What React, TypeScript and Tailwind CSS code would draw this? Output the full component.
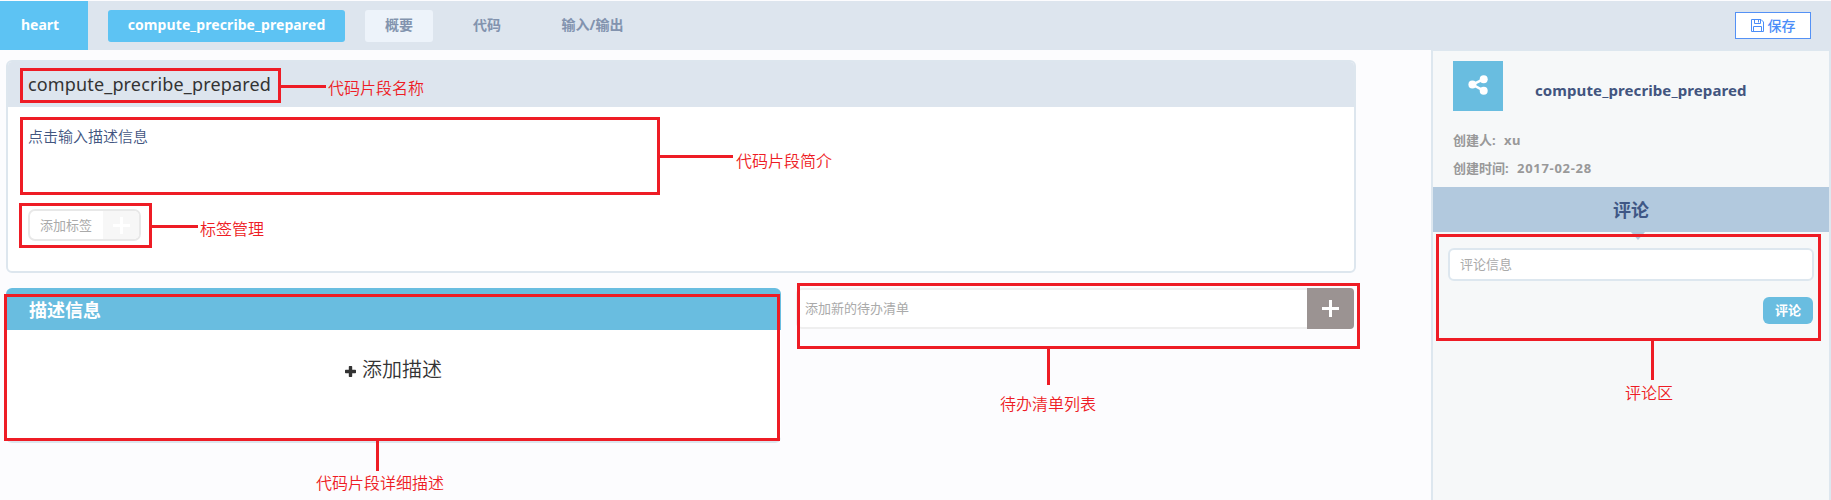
import React from "react";

function Cross({ className }: { className: string }) {
  return (
    <svg viewBox="0 0 17 17" className={className} fill="currentColor">
      <path d="M7 0h3v7h7v3h-7v7h-3v-7h-7v-3h7z" />
    </svg>
  );
}

function BoldPlus() {
  return (
    <svg viewBox="0 0 11 11" className="mt-[2px] h-[11px] w-[11px]" fill="currentColor">
      <path d="M4.5 0h2q.7 0 .7.7v3.1h3.1q.7 0 .7.7v2q0 .7-.7.7H7.2v3.1q0 .7-.7.7h-2q-.7 0-.7-.7V7.2H.7q-.7 0-.7-.7v-2q0-.7.7-.7h3.1V.7q0-.7.7-.7z" />
    </svg>
  );
}

function Share() {
  return (
    <svg viewBox="0 0 20 20" className="-mt-0.5 h-5 w-5" fill="currentColor">
      <path d="M15.7 4.2 4.4 9.6l11.3 6" fill="none" stroke="currentColor" strokeWidth="2.5" />
      <circle cx="15.7" cy="4.2" r="4" />
      <circle cx="4.4" cy="9.6" r="4" />
      <circle cx="15.7" cy="15.7" r="4" />
    </svg>
  );
}

function Floppy() {
  return (
    <svg viewBox="0 0 13 13" className="h-[13px] w-[13px]" fill="none" stroke="currentColor">
      <path d="M.5.5h9.5l2.5 2.5v9.5H.5zM3.5.5v4h6v-4M2.5 12.5v-5h8v5M7.5 1v2.5" />
    </svg>
  );
}

function Box({ className }: { className: string }) {
  return <div className={`absolute border-3 border-[#ee1c25] ${className}`} />;
}

function Line({ className }: { className: string }) {
  return <div className={`absolute bg-[#ee1c25] ${className}`} />;
}

function Note({ className, children }: { className: string; children: string }) {
  return (
    <span
      className={`absolute text-base leading-6 font-[350] whitespace-nowrap text-[#ee1c25] ${className}`}
    >
      {children}
    </span>
  );
}

function Annotations() {
  return (
    <div className="pointer-events-none absolute inset-0">
      <Box className="top-[68px] left-[20px] h-[35px] w-[261px]" />
      <Line className="top-[85px] left-[281px] h-[3px] w-[45px]" />
      <Note className="top-[76px] left-[328px]">代码片段名称</Note>
      <Box className="top-[117px] left-[20px] h-[78px] w-[640px]" />
      <Line className="top-[155px] left-[660px] h-[3px] w-[73px]" />
      <Note className="top-[149px] left-[736px]">代码片段简介</Note>
      <Box className="top-[203px] left-[19px] h-[45px] w-[133px]" />
      <Line className="top-[225px] left-[152px] h-[3px] w-[46px]" />
      <Note className="top-[217px] left-[200px]">标签管理</Note>
      <Box className="top-[294px] left-[4px] h-[147px] w-[776px]" />
      <Line className="top-[441px] left-[376px] h-[30px] w-[3px]" />
      <Note className="top-[471px] left-[316px]">代码片段详细描述</Note>
      <Box className="top-[283px] left-[797px] h-[66px] w-[563px]" />
      <Line className="top-[349px] left-[1047px] h-[36px] w-[3px]" />
      <Note className="top-[392px] left-[1000px]">待办清单列表</Note>
      <Box className="top-[234px] left-[1436px] h-[107px] w-[385px]" />
      <Line className="top-[341px] left-[1651px] h-[39px] w-[3px]" />
      <Note className="top-[381px] left-[1625px]">评论区</Note>
    </div>
  );
}

function TopBar() {
  return (
    <header className="mt-px flex h-[49px] items-center bg-[#dde5ee] text-sm font-bold text-[#8293ae]">
      <div className="flex h-full w-[88px] items-center bg-[#5dc3f3] pb-0.5 pl-[21px] text-white">heart</div>
      <div className="ml-5 flex h-8 w-[237px] items-center justify-center rounded-[3px] bg-[#5dc3f3] pb-0.5 tracking-[0.1px] text-white">
        compute_precribe_prepared
      </div>
      <nav className="ml-5 flex">
        <a className="flex h-8 w-[68px] items-center justify-center rounded-[3px] bg-[#edf3fa] pb-0.5">概要</a>
        <a className="ml-5 flex h-8 w-[68px] items-center justify-center pb-0.5">代码</a>
        <a className="ml-5 flex h-8 w-[103px] items-center justify-center pb-0.5">输入/输出</a>
      </nav>
      <button className="mr-5 ml-auto flex h-[27px] w-[76px] items-center justify-center gap-1 border border-[#5491f5] bg-white font-medium text-[#4b8df8]">
        <Floppy />
        保存
      </button>
    </header>
  );
}

function SummaryCard() {
  return (
    <section className="h-[213px] overflow-hidden rounded-md border-2 border-[#dde6ee] bg-white">
      <h1 className="flex h-[45px] items-center bg-[#dde5ee] pb-0.5 pl-5 text-lg tracking-[0.15px] text-[#333]">
        compute_precribe_prepared
      </h1>
      <p className="h-[102px] pt-[19px] pl-5 text-[15px] leading-5 font-[350] text-[#42557f]">点击输入描述信息</p>
      <div className="ml-5 flex h-8 w-[113px] overflow-hidden rounded-[7px] border-2 border-[#e8e8e8] text-[13px] text-[#aaa]">
        <span className="flex w-[73px] items-center pt-0.5 pl-2.5">添加标签</span>
        <span className="flex flex-1 items-center justify-center bg-[#f7f7f7] text-white">
          <Cross className="h-[17px] w-[17px]" />
        </span>
      </div>
    </section>
  );
}

function DescriptionCard() {
  return (
    <section className="h-[155px] w-[775px] overflow-hidden rounded-md border-b-2 border-[#dde6ee] bg-white">
      <h2 className="flex h-[42px] items-center bg-[#69bde0] pt-0.5 pl-[23px] text-lg font-bold text-white">描述信息</h2>
      <div className="flex h-[80px] items-center justify-center gap-1.5 text-xl font-[350] text-[#333]">
        <BoldPlus />
        添加描述
      </div>
    </section>
  );
}

function TodoInput() {
  return (
    <div className="ml-[15px] flex h-[41px] w-[558px] text-[13px] text-[#aaa]">
      <div className="flex flex-1 items-center rounded-l-md border-2 border-r-0 border-[#efefef] bg-white pl-[7px]">
        添加新的待办清单
      </div>
      <button className="flex w-[47px] items-center justify-center rounded-r bg-[#9b9392] text-white">
        <Cross className="h-[17px] w-[17px]" />
      </button>
    </div>
  );
}

function Sidebar() {
  return (
    <aside className="flex w-[400px] flex-col border-2 border-t border-b-0 border-[#dde7ef] bg-[#f6f8f9]">
      <div className="mt-2.5 ml-5 flex h-[50px]">
        <div className="flex w-[50px] items-center justify-center bg-[#69bde0] text-white">
          <Share />
        </div>
        <h3 className="mt-[17px] ml-8 text-[15px] leading-6 font-bold tracking-[0.1px] text-[#42557f]">
          compute_precribe_prepared
        </h3>
      </div>
      <div className="mt-[15px] ml-5 text-[13px] leading-7 font-bold text-[#999]">
        <p className="flex">
          <span className="w-[51px]">创建人:</span>
          <span className="tracking-[0.5px]">xu</span>
        </p>
        <p className="flex">
          <span className="w-16">创建时间:</span>
          <span className="tracking-[0.7px]">2017-02-28</span>
        </p>
      </div>
      <h4 className="relative mt-[5px] flex h-[45px] items-center justify-center bg-[#b2c9de] text-lg font-bold text-[#3f5785]">
        评论
        <svg viewBox="0 0 14 8" className="absolute top-full left-[198px] h-2 w-3.5" fill="#b2c9de">
          <path d="M0 0h14L7 8z" />
        </svg>
      </h4>
      <div className="mt-4 ml-[15px] flex h-[33px] w-[366px] items-center rounded-md border-2 border-[#dde7ef] bg-white pl-2.5 text-[13px] text-[#aaa]">
        评论信息
      </div>
      <button className="mt-4 mr-4 h-[27px] w-[50px] self-end rounded-md bg-[#69bde0] text-[13px] font-bold text-white">
        评论
      </button>
    </aside>
  );
}

export default function App() {
  return (
    <div className="relative flex h-[500px] w-[1831px] flex-col overflow-hidden bg-[#fcfcfe] font-['Noto_Sans','Noto_Sans_CJK_SC',sans-serif]">
      <TopBar />
      <div className="flex flex-1">
        <main className="mr-[75px] w-[1356px] pt-2.5 pl-1.5">
          <SummaryCard />
          <div className="mt-[15px] flex">
            <DescriptionCard />
            <TodoInput />
          </div>
        </main>
        <Sidebar />
      </div>
      <Annotations />
    </div>
  );
}
